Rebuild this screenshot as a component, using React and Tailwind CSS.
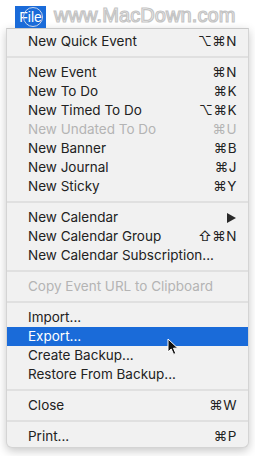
import React from "react";

const Sep = () => (
  <div className="h-[12px] flex items-center">
    <div className="h-[2px] w-full bg-[#e0e0e0]" />
  </div>
);

const Arrow = () => (
  <svg width="9" height="10" viewBox="0 0 9 10" className="mr-[1px]">
    <path d="M0 0 L9 5 L0 10 Z" fill="#2a2a2a" />
  </svg>
);

const Cursor = () => (
  <svg width="12" height="18" viewBox="0 0 12 18" className="absolute left-[160px] top-[11px]">
    <path d="M1 1 L1 14 L4.2 11 L6.6 16.4 L8.8 15.4 L6.5 10.2 L10.8 10.2 Z" fill="#111" stroke="#fff" strokeWidth="1" strokeLinejoin="round" />
  </svg>
);

const Row = ({ label, sc, disabled, active, arrow, cursor }) => (
  <div
    className={
      "relative h-[19px] flex items-center justify-between pl-[21px] pr-[11px] " +
      (active ? "bg-[#1a6bd9] text-white" : disabled ? "text-[#b4b4b4]" : "text-[#222222]")
    }
  >
    <span>{label}</span>
    {sc ? <span className="font-['Inter','DejaVu_Sans',sans-serif] tracking-[0.5px]">{sc}</span> : null}
    {arrow ? <Arrow /> : null}
    {cursor ? <Cursor /> : null}
  </div>
);

export default function App() {
  return (
    <div className="w-[255px] h-[456px] bg-white relative overflow-hidden font-['Inter','DejaVu_Sans',sans-serif]">
      <div className="h-[28px] flex items-start">
        <div className="relative ml-[15px] mt-[6px] w-[31px] h-[22px] bg-[#1a6bd9] text-white text-[14px] leading-[22px] flex justify-center font-['Liberation_Sans',sans-serif]">
          File
          <div className="absolute left-[8px] top-[1px] w-[20px] h-[20px] rounded-full border-[1.5px] border-[#c9d6ea]" />
        </div>
        <div className="ml-[8px] mt-[3px] text-[20px] leading-[25px] text-white [-webkit-text-stroke:1.2px_#c4c4c4] font-['Liberation_Sans',sans-serif] tracking-[0.1px]">
          www.MacDown.com
        </div>
      </div>
      <div className="mx-[6px] w-[243px] bg-[#f1f1f1] rounded-b-[6px] border border-[#d4d4d4] border-t-[#c8c8c8] shadow-[0_3px_10px_rgba(0,0,0,0.22)] pt-[3px] pb-[1px] text-[13.5px]">
        <Row label="New Quick Event" sc="⌥⌘N" />
        <Sep />
        <Row label="New Event" sc="⌘N" />
        <Row label="New To Do" sc="⌘K" />
        <Row label="New Timed To Do" sc="⌥⌘K" />
        <Row label="New Undated To Do" sc="⌘U" disabled />
        <Row label="New Banner" sc="⌘B" />
        <Row label="New Journal" sc="⌘J" />
        <Row label="New Sticky" sc="⌘Y" />
        <Sep />
        <Row label="New Calendar" arrow />
        <Row label="New Calendar Group" sc="⇧⌘N" />
        <Row label="New Calendar Subscription..." />
        <Sep />
        <Row label="Copy Event URL to Clipboard" disabled />
        <Sep />
        <Row label="Import..." />
        <Row label="Export..." active cursor />
        <Row label="Create Backup..." />
        <Row label="Restore From Backup..." />
        <Sep />
        <Row label="Close" sc="⌘W" />
        <Sep />
        <Row label="Print..." sc="⌘P" />
      </div>
    </div>
  );
}
